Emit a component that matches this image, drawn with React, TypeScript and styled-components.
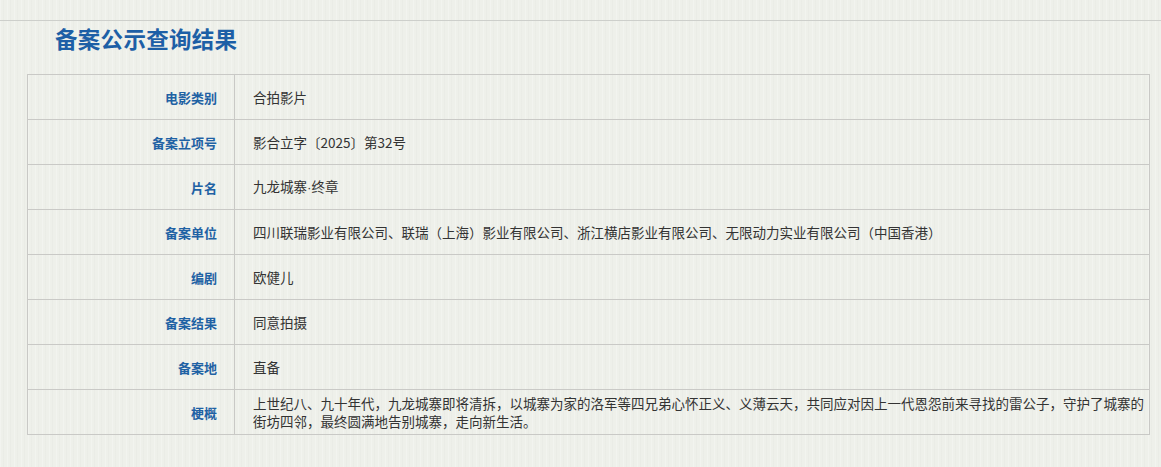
import React from 'react';
import styled, { createGlobalStyle } from 'styled-components';

const Global = createGlobalStyle`
  html, body {
    margin: 0;
    padding: 0;
  }
  body {
    background-color: #eef0ea;
    background-image: repeating-linear-gradient(
      90deg,
      rgba(255, 255, 255, 0.25) 0px,
      rgba(255, 255, 255, 0.25) 1px,
      rgba(0, 0, 0, 0) 1px,
      rgba(0, 0, 0, 0) 3px,
      rgba(0, 0, 0, 0.015) 3px,
      rgba(0, 0, 0, 0.015) 4px,
      rgba(0, 0, 0, 0) 4px,
      rgba(0, 0, 0, 0) 7px
    );
    font-family: 'Noto Sans CJK SC', 'Liberation Sans', sans-serif;
  }
`;

const Page = styled.div`
  height: 467px;
  padding-top: 20px;
  box-sizing: border-box;
`;

const Section = styled.div`
  border-top: 1px solid #cdcfcb;
  padding: 0 11px 0 27px;
`;

const Title = styled.h2`
  margin: 0;
  padding: 0 0 0 28px;
  height: 53px;
  line-height: 28px;
  padding-top: 3px;
  box-sizing: border-box;
  font-size: 22.5px;
  font-weight: 700;
  color: #1d5fa6;
  letter-spacing: 0.3px;
`;

const Table = styled.table`
  width: 100%;
  border-collapse: collapse;
  border: 1px solid #c9c9c6;
`;

const Row = styled.tr`
  height: 45px;
`;

const Label = styled.th`
  width: 189px;
  padding: 0 17px 0 0;
  border: 1px solid #c9c9c6;
  text-align: right;
  font-size: 13px;
  font-weight: 700;
  color: #1f62a4;
  vertical-align: middle;
`;

const Value = styled.td`
  padding: 0 4px 0 18px;
  border: 1px solid #c9c9c6;
  font-size: 13.5px;
  line-height: 18px;
  color: #333333;
  vertical-align: middle;
`;

const Dot = styled.span`
  font-family: 'Liberation Sans', sans-serif;
`;

const rows: [string, React.ReactNode][] = [
  ['电影类别', '合拍影片'],
  ['备案立项号', '影合立字〔2025〕第32号'],
  [
    '片名',
    <>
      九龙城寨<Dot>·</Dot>终章
    </>,
  ],
  ['备案单位', '四川联瑞影业有限公司、联瑞（上海）影业有限公司、浙江横店影业有限公司、无限动力实业有限公司（中国香港）'],
  ['编剧', '欧健儿'],
  ['备案结果', '同意拍摄'],
  ['备案地', '直备'],
  [
    '梗概',
    '上世纪八、九十年代，九龙城寨即将清拆，以城寨为家的洛军等四兄弟心怀正义、义薄云天，共同应对因上一代恩怨前来寻找的雷公子，守护了城寨的街坊四邻，最终圆满地告别城寨，走向新生活。',
  ],
];

export default function App() {
  return (
    <Page>
      <Global />
      <Section>
        <Title>备案公示查询结果</Title>
        <Table>
          <tbody>
            {rows.map(([k, v]) => (
              <Row key={k}>
                <Label>{k}</Label>
                <Value>{v}</Value>
              </Row>
            ))}
          </tbody>
        </Table>
      </Section>
    </Page>
  );
}
